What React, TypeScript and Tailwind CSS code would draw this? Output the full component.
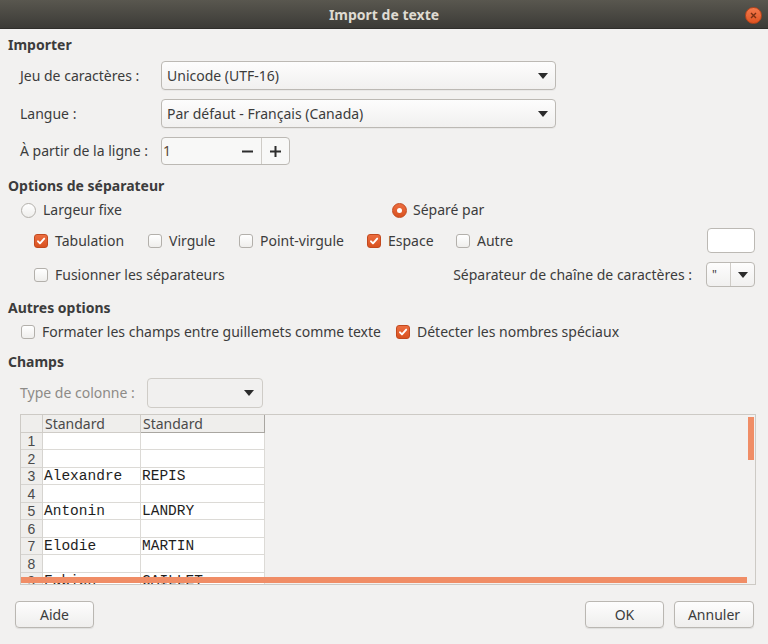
import clsx from "clsx";

const sans = "font-['Noto_Sans','Liberation_Sans',Arial,sans-serif]";
const plain = "font-['Liberation_Sans',Arial,sans-serif]";
const mono = "font-['Liberation_Mono','Courier_New',monospace]";

function Arrow({ color = "#2b2b2b" }: { color?: string }) {
  return (
    <svg width="10" height="6" viewBox="0 0 10 6">
      <path d="M0 0h10L5 6z" fill={color} />
    </svg>
  );
}

function Checkbox({ checked = false }: { checked?: boolean }) {
  return (
    <span
      className={clsx(
        "flex h-[14px] w-[14px] shrink-0 items-center justify-center rounded-[3px] border",
        checked
          ? "border-[#c2491e] bg-linear-to-b from-[#ec6d3f] to-[#d9521f]"
          : "border-[#b3b0ab] bg-linear-to-b from-white to-[#efeeec]",
      )}
    >
      {checked && (
        <svg width="10" height="10" viewBox="0 0 10 10">
          <path
            d="M2 5.3l2 2.1L8.2 2.6"
            stroke="white"
            strokeWidth="1.9"
            fill="none"
            strokeLinecap="round"
            strokeLinejoin="round"
          />
        </svg>
      )}
    </span>
  );
}

function Radio({ checked = false }: { checked?: boolean }) {
  return (
    <span
      className={clsx(
        "flex h-[15px] w-[15px] shrink-0 items-center justify-center rounded-full border",
        checked
          ? "border-[#c2491e] bg-linear-to-b from-[#ec6d3f] to-[#d9521f]"
          : "border-[#b3b0ab] bg-linear-to-b from-white to-[#efeeec]",
      )}
    >
      {checked && <span className="h-[5px] w-[5px] rounded-full bg-white" />}
    </span>
  );
}

function Check({
  label,
  checked,
  className,
}: {
  label: string;
  checked?: boolean;
  className?: string;
}) {
  return (
    <div className={clsx("flex items-center gap-[7px]", className)}>
      <Checkbox checked={checked} />
      <span>{label}</span>
    </div>
  );
}

function Combo({ value, className }: { value: string; className?: string }) {
  return (
    <div
      className={clsx(
        "flex items-center justify-between rounded-[4px] border border-[#bcb9b4] bg-linear-to-b from-[#fdfdfd] to-[#f1f0ef] pl-[5px] pr-[7px] shadow-[0_1px_0_rgba(0,0,0,0.04)]",
        className,
      )}
    >
      <span>{value}</span>
      <Arrow />
    </div>
  );
}

function Button({ label, className }: { label: string; className?: string }) {
  return (
    <button
      type="button"
      className={clsx(
        "flex h-[27px] items-center justify-center rounded-[4px] border border-[#bab7b2] bg-linear-to-b from-[#fdfdfd] to-[#efeeed] text-[14px] text-[#3c3c3c] shadow-[0_1px_1px_rgba(0,0,0,0.08)]",
        className,
      )}
    >
      {label}
    </button>
  );
}

const rows: [string, string][] = [
  ["", ""],
  ["", ""],
  ["Alexandre", "REPIS"],
  ["", ""],
  ["Antonin", "LANDRY"],
  ["", ""],
  ["Elodie", "MARTIN"],
  ["", ""],
  ["Fabien", "CAILLET"],
];

function Preview() {
  return (
    <div className="relative ml-[12px] h-[171px] w-[736px] overflow-hidden border border-[#cdcac5] bg-[#f2f1f0]">
      <div className="w-[245px]">
        <div className="flex h-[18px] text-[14px] leading-[17px] text-[#4a4a4a]">
          <div className="w-[22px] border-b border-r border-[#cfccc7] bg-[#efeeec]" />
          <div className="w-[98px] border-b border-r border-[#cfccc7] bg-[#efeeec] pl-[2px]">
            Standard
          </div>
          <div className="w-[124px] border-b border-r border-[#a9a6a1] bg-[#efeeec] pl-[2px]">
            Standard
          </div>
        </div>
        {rows.map(([a, b], i) => (
          <div
            key={i}
            className={clsx(
              "flex",
              i % 2 === 0 ? "h-[17px]" : "h-[18px]",
            )}
          >
            <div
              className={clsx(
                "flex w-[22px] items-end justify-center overflow-hidden border-b border-r border-[#d6d4d0] bg-[#efeeec] text-[14px] leading-[15px] text-[#4a4a4a]",
                plain,
              )}
            >
              {i + 1}
            </div>
            <div
              className={clsx(
                "w-[98px] overflow-hidden border-b border-r border-[#dcdad6] bg-white pl-[1px] text-[14.5px] leading-[16px] text-[#1e1e1e]",
                mono,
              )}
            >
              {a}
            </div>
            <div
              className={clsx(
                "w-[124px] overflow-hidden border-b border-r border-[#dcdad6] bg-white pl-[1px] text-[14.5px] leading-[16px] text-[#1e1e1e]",
                mono,
              )}
            >
              {b}
            </div>
          </div>
        ))}
      </div>
      <div className="absolute right-[1px] top-[2px] h-[43px] w-[6px] bg-[#f08d66]" />
      <div className="absolute bottom-[1px] left-0 h-[6px] w-[726px] bg-[#f08d66]" />
    </div>
  );
}

export default function App() {
  return (
    <div
      className={clsx(
        "flex h-[644px] w-[768px] flex-col overflow-hidden bg-[#f2f1f0] text-[14px] text-[#3c3c3c]",
        sans,
      )}
    >
      <div className="relative flex h-[29px] shrink-0 items-center justify-center border-b border-[#2f2e2b] bg-linear-to-b from-[#59574f] to-[#3c3b37]">
        <span className="text-[14px] font-bold text-[#dfdbd2]">Import de texte</span>
        <span className="absolute left-[745px] top-[7px] flex h-[17px] w-[17px] items-center justify-center rounded-full border border-[#b8431a] bg-linear-to-b from-[#f47a4c] to-[#e0531f]">
          <svg width="7" height="7" viewBox="0 0 7 7">
            <path d="M1 1l5 5M6 1L1 6" stroke="#7a3013" strokeWidth="1.4" />
          </svg>
        </span>
      </div>

      <div className="flex flex-col pl-[8px] pr-[13px] leading-[18px]">
        <div className="mt-[7px] h-[18px] font-bold">Importer</div>

        <div className="mt-[7px] flex h-[29px] items-center pl-[12px]">
          <span className="w-[141px]">Jeu de caractères :</span>
          <Combo value="Unicode (UTF-16)" className="h-[29px] w-[395px]" />
        </div>
        <div className="mt-[9px] flex h-[29px] items-center pl-[12px]">
          <span className="w-[141px]">Langue :</span>
          <Combo value="Par défaut - Français (Canada)" className="h-[29px] w-[395px]" />
        </div>
        <div className="mt-[9px] flex h-[28px] items-center pl-[12px]">
          <span className="w-[141px]">À partir de la ligne :</span>
          <div className="flex h-[28px] w-[129px] items-center rounded-[4px] border border-[#bcb9b4] bg-[#f8f8f7]">
            <span className="flex-1 pl-[1px] text-[#5b4636]">1</span>
            <span className="flex h-full w-[28px] items-center justify-center">
              <svg width="11" height="11" viewBox="0 0 11 11">
                <path d="M0 5.5h11" stroke="#2d2d2d" strokeWidth="2" />
              </svg>
            </span>
            <span className="flex h-full w-[28px] items-center justify-center border-l border-[#cfccc7]">
              <svg width="11" height="11" viewBox="0 0 11 11">
                <path d="M0 5.5h11M5.5 0v11" stroke="#2d2d2d" strokeWidth="2" />
              </svg>
            </span>
          </div>
        </div>

        <div className="mt-[12px] h-[18px] font-bold">Options de séparateur</div>
        <div className="mt-[5px] flex h-[20px] items-center pl-[13px]">
          <div className="flex w-[371px] items-center gap-[7px]">
            <Radio />
            <span>Largeur fixe</span>
          </div>
          <div className="flex items-center gap-[6px]">
            <Radio checked />
            <span>Séparé par</span>
          </div>
        </div>
        <div className="mt-[8px] flex h-[25px] items-center pl-[26px]">
          <Check label="Tabulation" checked className="w-[114px]" />
          <Check label="Virgule" className="w-[91px]" />
          <Check label="Point-virgule" className="w-[128px]" />
          <Check label="Espace" checked className="w-[89px]" />
          <Check label="Autre" />
          <div className="ml-auto h-[25px] w-[48px] rounded-[4px] border border-[#bcb9b4] bg-white" />
        </div>
        <div className="mt-[9px] flex h-[25px] items-center pl-[26px]">
          <Check label="Fusionner les séparateurs" />
          <span className="ml-auto mr-[14px]">Séparateur de chaîne de caractères :</span>
          <div className="flex h-[25px] w-[49px] items-center rounded-[4px] border border-[#bcb9b4] bg-linear-to-b from-[#fdfdfd] to-[#f1f0ef]">
            <span className="w-[23px] pl-[5px] text-[12px]">"</span>
            <span className="flex h-full flex-1 items-center justify-center border-l border-[#cfccc7]">
              <Arrow />
            </span>
          </div>
        </div>

        <div className="mt-[12px] h-[18px] font-bold">Autres options</div>
        <div className="mt-[5px] flex h-[20px] items-center pl-[13px]">
          <Check label="Formater les champs entre guillemets comme texte" className="w-[375px]" />
          <Check label="Détecter les nombres spéciaux" checked />
        </div>

        <div className="mt-[11px] h-[18px] font-bold">Champs</div>
        <div className="mt-[7px] flex h-[30px] items-center pl-[12px]">
          <span className="w-[127px] text-[#8d8b87]">Type de colonne :</span>
          <div className="flex h-[30px] w-[116px] items-center justify-end rounded-[4px] border border-[#cfccc7] bg-[#f1f0ef] pr-[8px]">
            <Arrow />
          </div>
        </div>

        <div className="mt-[6px]">
          <Preview />
        </div>

        <div className="mt-[16px] flex items-center">
          <Button label="Aide" className="ml-[7px] w-[79px]" />
          <Button label="OK" className="ml-auto w-[79px]" />
          <Button label="Annuler" className="ml-[10px] mr-[1px] w-[80px]" />
        </div>
      </div>
    </div>
  );
}
